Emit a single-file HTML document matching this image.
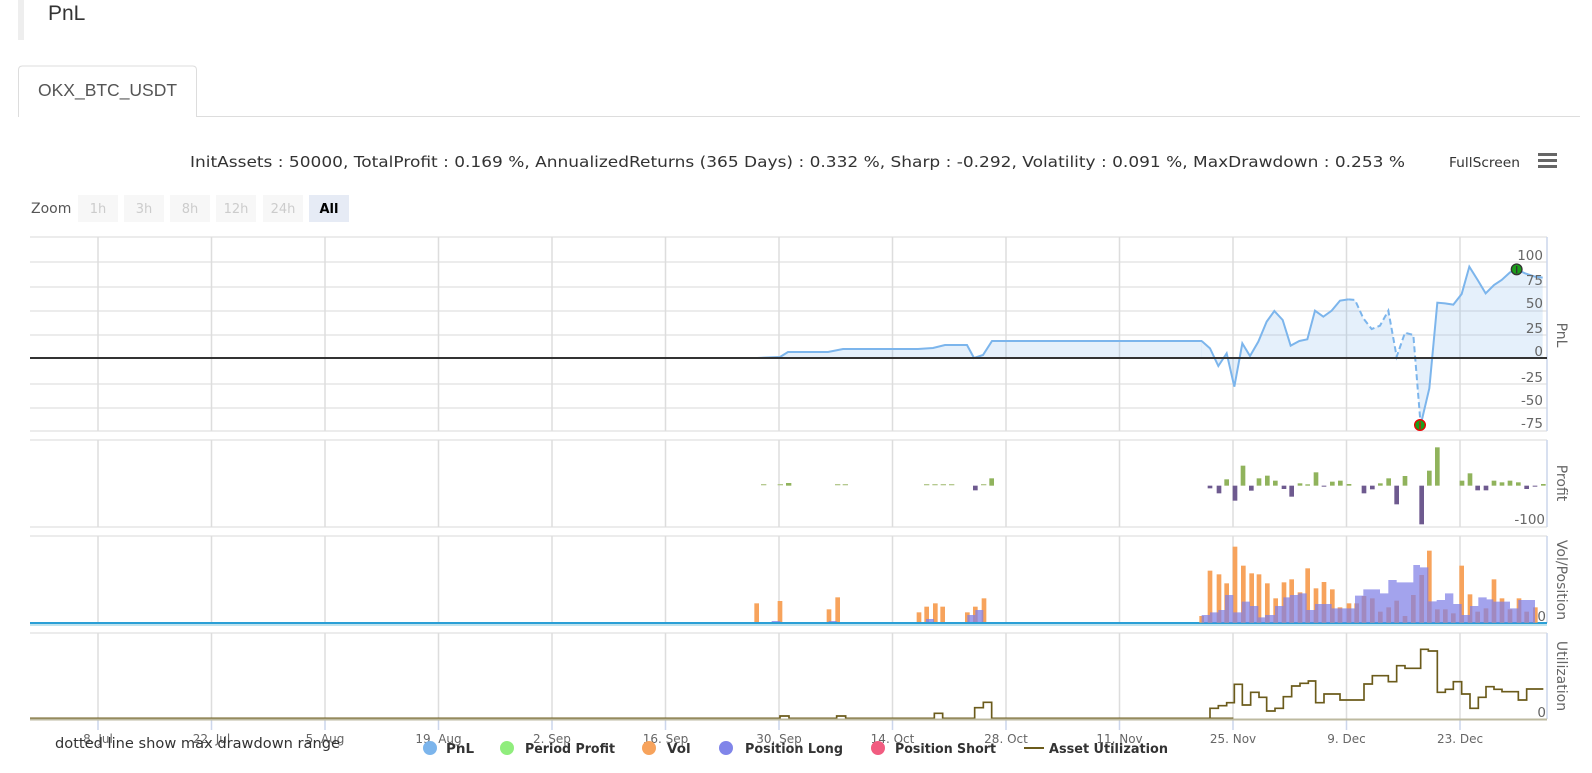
<!DOCTYPE html>
<html><head><meta charset="utf-8"><style>
html,body{margin:0;padding:0;background:#fff;width:1592px;height:773px;overflow:hidden;font-family:"Liberation Sans","DejaVu Sans",sans-serif;}
svg{position:absolute;left:0;top:0;}
</style></head><body>
<svg width="1592" height="773" viewBox="0 0 1592 773" xmlns="http://www.w3.org/2000/svg" font-family="DejaVu Sans, Liberation Sans, sans-serif">
<!-- header -->
<rect x="18" y="0" width="6" height="40" fill="#eee"/>
<text x="48" y="20" font-size="21" fill="#333" font-family="Liberation Sans, sans-serif">PnL</text>
<path d="M18.5 117 V70 Q18.5 66 22.5 66 H192.5 Q196.5 66 196.5 70 V116.5 H1580" fill="none" stroke="#ddd"/>
<text x="38" y="96" font-size="17.5" fill="#555" font-family="Liberation Sans, sans-serif">OKX_BTC_USDT</text>
<text x="190" y="167" font-size="15" fill="#333" textLength="1215" lengthAdjust="spacingAndGlyphs">InitAssets : 50000, TotalProfit : 0.169 %, AnnualizedReturns (365 Days) : 0.332 %, Sharp : -0.292, Volatility : 0.091 %, MaxDrawdown : 0.253 %</text>
<text x="1449" y="167" font-size="13.5" fill="#333" textLength="71" lengthAdjust="spacingAndGlyphs">FullScreen</text>
<g fill="#666"><rect x="1538" y="153" width="19" height="3"/><rect x="1538" y="159" width="19" height="3"/><rect x="1538" y="165" width="19" height="3"/></g>
<text x="31" y="213" font-size="14" fill="#555">Zoom</text>
<g font-size="13" fill="#ccc" text-anchor="middle">
<rect x="78" y="195" width="40" height="27" fill="#f7f7f7"/><text x="98" y="213">1h</text>
<rect x="124" y="195" width="40" height="27" fill="#f7f7f7"/><text x="144" y="213">3h</text>
<rect x="170" y="195" width="40" height="27" fill="#f7f7f7"/><text x="190" y="213">8h</text>
<rect x="216" y="195" width="40" height="27" fill="#f7f7f7"/><text x="236" y="213">12h</text>
<rect x="263" y="195" width="40" height="27" fill="#f7f7f7"/><text x="283" y="213">24h</text>
<rect x="309" y="195" width="40" height="27" fill="#e6ebf5"/><text x="329" y="213" fill="#000" font-weight="bold">All</text>
</g>
<!-- grids -->
<g stroke="#e6e6e6" stroke-width="1.5">
<line x1="30" y1="237" x2="1547" y2="237"/>
<line x1="30" y1="262" x2="1547" y2="262"/><line x1="30" y1="287" x2="1547" y2="287"/>
<line x1="30" y1="311" x2="1547" y2="311"/><line x1="30" y1="335" x2="1547" y2="335"/>
<line x1="30" y1="384" x2="1547" y2="384"/><line x1="30" y1="408" x2="1547" y2="408"/>
<line x1="30" y1="431" x2="1547" y2="431"/>
<line x1="30" y1="440" x2="1547" y2="440"/><line x1="30" y1="527" x2="1547" y2="527"/>
<line x1="30" y1="536" x2="1547" y2="536"/>
<line x1="30" y1="633" x2="1547" y2="633"/>
</g>
<g stroke="#ddd" stroke-width="1.5">
<path d="M98 237V431M211.5 237V431M325 237V431M438.5 237V431M552 237V431M665.5 237V431M779 237V431M892.5 237V431M1006 237V431M1119.5 237V431M1233 237V431M1346.5 237V431M1460 237V431"/>
<path d="M98 440V527M211.5 440V527M325 440V527M438.5 440V527M552 440V527M665.5 440V527M779 440V527M892.5 440V527M1006 440V527M1119.5 440V527M1233 440V527M1346.5 440V527M1460 440V527"/>
<path d="M98 536V623M211.5 536V623M325 536V623M438.5 536V623M552 536V623M665.5 536V623M779 536V623M892.5 536V623M1006 536V623M1119.5 536V623M1233 536V623M1346.5 536V623M1460 536V623"/>
<path d="M98 633V719M211.5 633V719M325 633V719M438.5 633V719M552 633V719M665.5 633V719M779 633V719M892.5 633V719M1006 633V719M1119.5 633V719M1233 633V719M1346.5 633V719M1460 633V719"/>
</g>
<g stroke="#ccd6eb" stroke-width="1.5"><path d="M1547 237V431M1547 440V527M1547 536V623M1547 633V719"/>
<path d="M98 720V730M211.5 720V730M325 720V730M438.5 720V730M552 720V730M665.5 720V730M779 720V730M892.5 720V730M1006 720V730M1119.5 720V730M1233 720V730M1346.5 720V730M1460 720V730"/></g>
<!-- PnL early -->
<path d="M30 358 L757 358 L780 357 L788 352 L828 352 L843 349 L918 349 L933 348 L945 345 L967 345 L974 358 L983 355 L992 341 L1202 341 L1202 358 Z" fill="rgba(124,181,236,0.2)"/>
<path d="M30 358 L757 358 L780 357 L788 352 L828 352 L843 349 L918 349 L933 348 L945 345 L967 345 L974 358 L983 355 L992 341 L1202 341" fill="none" stroke="#7cb5ec" stroke-width="2"/>
<g transform="translate(1150 230) scale(0.33333)">
<path d="M155 333 L180 355 L205 408 L230 370 L253 470 L277 340 L300 378 L325 335 L350 275 L373 243 L398 270 L422 347 L448 333 L472 328 L495 242 L520 260 L545 242 L570 212 L595 208 L615 210 L640 265 L665 297 L690 287 L715 242 L740 380 L765 308 L790 315 L812 585 L838 475 L862 218 L885 220 L910 224 L935 192 L958 110 L983 150 L1007 190 L1032 165 L1055 150 L1080 127 L1100 118 L1125 130 L1155 140 L1178 143 L1178 383 L155 383 Z" fill="rgba(124,181,236,0.2)"/>
<path d="M155 333 L180 355 L205 408 L230 370 L253 470 L277 340 L300 378 L325 335 L350 275 L373 243 L398 270 L422 347 L448 333 L472 328 L495 242 L520 260 L545 242 L570 212 L595 208" fill="none" stroke="#7cb5ec" stroke-width="6"/>
<path d="M595 208 L615 210 L640 265 L665 297 L690 287 L715 242 L740 380 L765 308 L790 315 L812 585" fill="none" stroke="#7cb5ec" stroke-width="6" stroke-dasharray="18 10"/>
<path d="M812 585 L838 475 L862 218 L885 220 L910 224 L935 192 L958 110 L983 150 L1007 190 L1032 165 L1055 150 L1080 127 L1100 118 L1125 130 L1155 140 L1178 143" fill="none" stroke="#7cb5ec" stroke-width="6"/>
</g>
<line x1="30" y1="358" x2="1547" y2="358" stroke="#333" stroke-width="2"/>
<g transform="translate(1150 230) scale(0.33333)">
<circle cx="1100" cy="118" r="16" fill="#1a9e1a" stroke="#333" stroke-width="4"/><path d="M1100 108V130" stroke="#333" stroke-width="4"/>
<circle cx="810" cy="585" r="16" fill="#1a9e1a" stroke="#e00" stroke-width="4"/><path d="M810 575V597" stroke="#e00" stroke-width="4"/>
<g fill="#6e5a8f">
<rect x="173" y="767" width="14" height="8"/><rect x="200" y="767" width="14" height="23"/><rect x="248" y="767" width="14" height="45"/><rect x="297" y="767" width="14" height="15"/><rect x="395" y="767" width="14" height="10"/><rect x="418" y="767" width="14" height="33"/><rect x="515" y="767" width="14" height="3"/><rect x="635" y="767" width="14" height="23"/><rect x="660" y="767" width="14" height="11"/><rect x="733" y="767" width="14" height="56"/><rect x="808" y="767" width="14" height="116"/><rect x="976" y="767" width="14" height="14"/><rect x="1001" y="767" width="14" height="14"/><rect x="1123" y="767" width="14" height="10"/><rect x="1148" y="767" width="14" height="3"/>
</g>
<g fill="#90b35c">
<rect x="223" y="748" width="14" height="19"/><rect x="272" y="707" width="14" height="60"/><rect x="320" y="745" width="14" height="22"/><rect x="345" y="737" width="14" height="30"/><rect x="369" y="752" width="14" height="15"/><rect x="443" y="760" width="14" height="7"/><rect x="466" y="763" width="14" height="4"/><rect x="491" y="727" width="14" height="40"/><rect x="540" y="755" width="14" height="12"/><rect x="564" y="752" width="14" height="15"/><rect x="590" y="762" width="14" height="5"/><rect x="684" y="760" width="14" height="7"/><rect x="709" y="745" width="14" height="22"/><rect x="758" y="738" width="14" height="29"/><rect x="831" y="722" width="14" height="45"/><rect x="855" y="652" width="14" height="115"/><rect x="929" y="752" width="14" height="15"/><rect x="953" y="730" width="14" height="37"/><rect x="1025" y="752" width="14" height="15"/><rect x="1049" y="757" width="14" height="10"/><rect x="1073" y="752" width="14" height="15"/><rect x="1098" y="757" width="14" height="10"/><rect x="1173" y="762" width="14" height="5"/>
</g>
</g>
<g transform="translate(700 320) scale(0.33333)">
<g fill="#b5c98f"><rect x="183" y="492" width="16" height="4"/><rect x="233" y="492" width="16" height="4"/><rect x="405" y="492" width="16" height="4"/><rect x="428" y="492" width="16" height="4"/><rect x="672" y="492" width="16" height="4"/><rect x="697" y="492" width="16" height="4"/><rect x="722" y="492" width="16" height="4"/><rect x="747" y="492" width="16" height="4"/><rect x="843" y="492" width="16" height="4"/></g>
<rect x="258" y="489" width="16" height="8" fill="#90b35c"/>
<rect x="868" y="475" width="14" height="22" fill="#90b35c"/>
<rect x="819" y="497" width="14" height="14" fill="#6e5a8f"/>
<g fill="#f7a35c"><rect x="163" y="850" width="14" height="58"/><rect x="233" y="843" width="14" height="65"/><rect x="380" y="868" width="14" height="40"/><rect x="406" y="832" width="14" height="76"/><rect x="650" y="877" width="14" height="31"/><rect x="673" y="860" width="14" height="48"/><rect x="699" y="850" width="14" height="58"/><rect x="721" y="860" width="14" height="48"/><rect x="795" y="877" width="14" height="31"/><rect x="819" y="860" width="14" height="48"/><rect x="845" y="835" width="14" height="73"/></g>
<g fill="rgba(128,128,230,0.75)"><rect x="215" y="903" width="26" height="5"/><rect x="386" y="903" width="24" height="5"/><rect x="678" y="897" width="24" height="11"/><rect x="802" y="885" width="24" height="23"/><rect x="826" y="870" width="24" height="38"/></g>
<path d="M-2010 1195 L240 1195 L240 1188 L267 1188 L267 1195 L410 1195 L410 1188 L437 1188 L437 1195 L703 1195 L703 1180 L728 1180 L728 1195 L824 1195 L824 1163 L850 1163 L850 1147 L875 1147 L875 1195 L1600 1195" fill="none" stroke="#6b5b1b" stroke-width="5"/>
</g>
<rect x="30" y="622" width="1517" height="4" fill="#bfe3ee"/>
<line x1="30" y1="623" x2="1547" y2="623" stroke="#2a9fd6" stroke-width="2"/>
<g transform="translate(1150 520) scale(0.33333)">
<g fill="#f7a35c">
<rect x="148" y="288" width="14" height="20"/><rect x="173" y="152" width="14" height="156"/><rect x="200" y="163" width="14" height="145"/><rect x="223" y="190" width="14" height="118"/><rect x="248" y="80" width="14" height="228"/><rect x="273" y="137" width="14" height="171"/><rect x="298" y="160" width="14" height="148"/><rect x="320" y="163" width="14" height="145"/><rect x="345" y="190" width="14" height="118"/><rect x="370" y="235" width="14" height="73"/><rect x="395" y="187" width="14" height="121"/><rect x="418" y="178" width="14" height="130"/><rect x="443" y="217" width="14" height="91"/><rect x="466" y="145" width="14" height="163"/><rect x="491" y="205" width="14" height="103"/><rect x="515" y="186" width="14" height="122"/><rect x="540" y="208" width="14" height="100"/><rect x="563" y="262" width="14" height="46"/><rect x="590" y="250" width="14" height="58"/><rect x="613" y="250" width="14" height="58"/><rect x="635" y="228" width="14" height="80"/><rect x="660" y="235" width="14" height="73"/><rect x="684" y="275" width="14" height="33"/><rect x="709" y="262" width="14" height="46"/><rect x="733" y="242" width="14" height="66"/><rect x="758" y="288" width="14" height="20"/><rect x="783" y="225" width="14" height="83"/><rect x="808" y="165" width="14" height="143"/><rect x="831" y="92" width="14" height="216"/><rect x="855" y="268" width="14" height="40"/><rect x="879" y="268" width="14" height="40"/><rect x="903" y="280" width="14" height="28"/><rect x="928" y="137" width="14" height="171"/><rect x="953" y="223" width="14" height="85"/><rect x="976" y="275" width="14" height="33"/><rect x="1001" y="265" width="14" height="43"/><rect x="1025" y="178" width="14" height="130"/><rect x="1049" y="235" width="14" height="73"/><rect x="1073" y="268" width="14" height="40"/><rect x="1100" y="235" width="14" height="73"/><rect x="1123" y="275" width="14" height="33"/><rect x="1149" y="262" width="14" height="46"/>
</g>
<path d="M155 308 V285 H180 V277 H205 V270 H225 V225 H250 V277 H275 V245 H300 V258 H325 V292 H345 V285 H375 V258 H400 V232 H420 V225 H445 V220 H470 V270 H495 V252 H545 V265 H615 V227 H640 V208 H690 V220 H715 V180 H740 V187 H790 V135 H810 V142 H835 V244 H860 V240 H885 V220 H910 V252 H935 V285 H960 V258 H985 V232 H1010 V238 H1030 V245 H1080 V265 H1105 V240 H1155 V308 Z" fill="rgba(128,128,230,0.72)"/>
<path d="M-10 598 H180 V565 H205 V557 H230 V548 H253 V493 H277 V555 H302 V517 H327 V532 H350 V573 H375 V565 H400 V530 H425 V498 H450 V490 H475 V483 H497 V548 H522 V522 H570 V540 H642 V492 H667 V467 H715 V485 H740 V437 H765 V445 H812 V388 H835 V393 H862 V517 H886 V508 H910 V485 H935 V522 H960 V565 H985 V532 H1008 V500 H1032 V508 H1056 V515 H1105 V540 H1130 V507 H1180" fill="none" stroke="#6b5b1b" stroke-width="5"/>
</g>
<line x1="30" y1="719.5" x2="1547" y2="719.5" stroke="#bdbaa0" stroke-width="2"/>
<g font-size="13.5" fill="#666" text-anchor="end">
<text x="1543" y="260">100</text><text x="1543" y="285">75</text><text x="1543" y="308">50</text><text x="1543" y="333">25</text><text x="1543" y="356">0</text><text x="1543" y="382">-25</text><text x="1543" y="405">-50</text><text x="1543" y="428">-75</text>
<text x="1545" y="524">-100</text><text x="1546" y="621">0</text><text x="1546" y="717">0</text>
</g>
<g font-size="14" fill="#666" text-anchor="middle">
<text transform="translate(1557 335) rotate(90)">PnL</text>
<text transform="translate(1557 483) rotate(90)">Profit</text>
<text transform="translate(1557 580) rotate(90)">Vol/Position</text>
<text transform="translate(1557 676) rotate(90)">Utilization</text>
</g>
<g font-size="12" fill="#666" text-anchor="middle">
<text x="98" y="743">8. Jul</text><text x="211.5" y="743">22. Jul</text><text x="325" y="743">5. Aug</text><text x="438.5" y="743">19. Aug</text><text x="552" y="743">2. Sep</text><text x="665.5" y="743">16. Sep</text><text x="779" y="743">30. Sep</text><text x="892.5" y="743">14. Oct</text><text x="1006" y="743">28. Oct</text><text x="1119.5" y="743">11. Nov</text><text x="1233" y="743">25. Nov</text><text x="1346.5" y="743">9. Dec</text><text x="1460" y="743">23. Dec</text>
</g>
<text x="55" y="748" font-size="14.5" fill="#333" textLength="285" lengthAdjust="spacingAndGlyphs">dotted line show max drawdown range</text>
<g font-size="13.5" font-weight="bold" fill="#333">
<circle cx="430" cy="748" r="7" fill="#7cb5ec"/><text x="446" y="753">PnL</text>
<circle cx="507" cy="748" r="7" fill="#90ed7d"/><text x="525" y="753" textLength="90" lengthAdjust="spacingAndGlyphs">Period Profit</text>
<circle cx="649" cy="748" r="7" fill="#f7a35c"/><text x="667" y="753">Vol</text>
<circle cx="726" cy="748" r="7" fill="#8085e9"/><text x="745" y="753" textLength="98" lengthAdjust="spacingAndGlyphs">Position Long</text>
<circle cx="878" cy="748" r="7" fill="#f15c80"/><text x="895" y="753" textLength="101" lengthAdjust="spacingAndGlyphs">Position Short</text>
<line x1="1024" y1="748" x2="1044" y2="748" stroke="#6b5b1b" stroke-width="2"/><text x="1049" y="753" textLength="119" lengthAdjust="spacingAndGlyphs">Asset Utilization</text>
</g>
</svg>
</body></html>
